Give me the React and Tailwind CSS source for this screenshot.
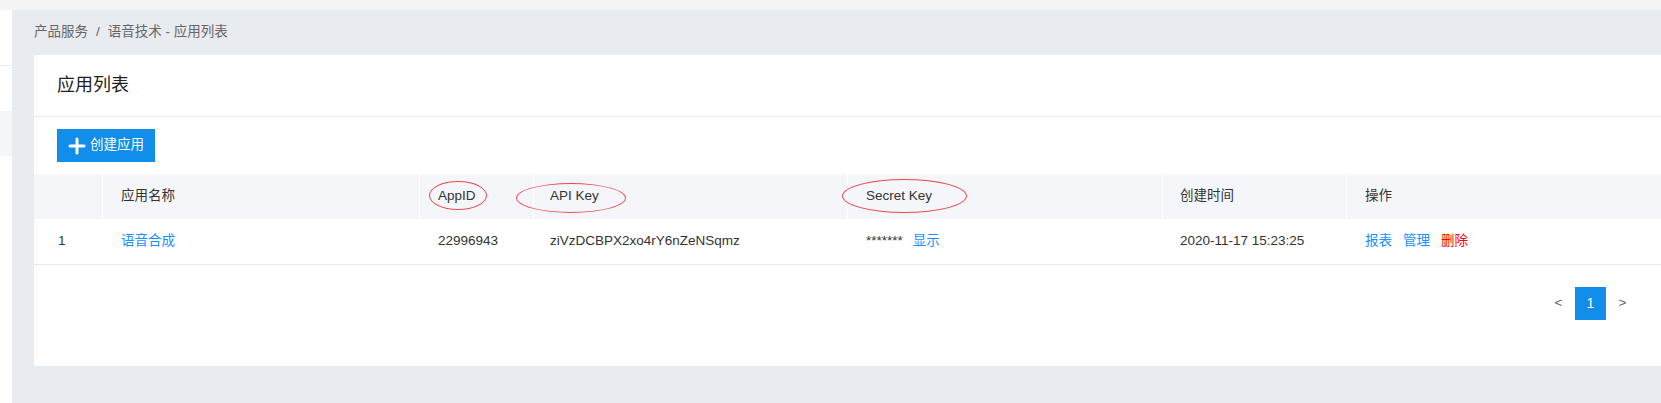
import { Plus } from 'lucide-react';

const font = { fontFamily: '"Liberation Sans", "Noto Sans CJK SC", sans-serif' };

const cols = 'grid grid-cols-[68px_317px_114px_314px_315px_184px_1fr]';

function Ring({ className }) {
  return <span className={`absolute rounded-[50%] border border-[#e84a4f] pointer-events-none ${className}`} />;
}

export default function App() {
  return (
    <div className="w-full h-[403px] flex flex-col bg-[#e8ebef] text-[#333] text-[13.5px] overflow-hidden" style={font}>
      <div className="h-[10px] bg-[#f4f4f4] shrink-0" />
      <div className="flex flex-1">
        {/* collapsed side menu */}
        <div className="w-[12px] bg-white flex flex-col shrink-0">
          <div className="h-[56px] border-b border-[#e8eaec]" />
          <div className="h-[45px]" />
          <div className="h-[45px] bg-[#f5f6fa]" />
        </div>

        <div className="flex-1 flex flex-col pl-[22px]">
          <div className="h-[45px] flex items-center text-[#666]">
            <span>产品服务</span>
            <span className="mx-[8px]">/</span>
            <span>语音技术 - 应用列表</span>
          </div>

          <div className="h-[311px] bg-white flex flex-col">
            <div className="h-[62px] flex items-center pl-[23px] border-b border-[#e8eaec] text-[18px] text-[#222]">
              应用列表
            </div>
            <div className="py-[12px] pl-[23px]">
              <button className="h-[33px] w-[98px] bg-[#108ee9] text-white flex items-center pl-[8px] gap-[1px]">
                <Plus size={24} strokeWidth={3} />
                <span>创建应用</span>
              </button>
            </div>

            <div className={`${cols} h-[45px] bg-[#f5f6fa] items-stretch`}>
              <div />
              <div className="border-l border-white flex items-center pl-[18px]">应用名称</div>
              <div className="border-l border-white flex items-center pl-[18px] relative">
                AppID
                <Ring className="left-[9px] top-[7px] w-[58px] h-[29px]" />
              </div>
              <div className="border-l border-white flex items-center pl-[16px] relative">
                API Key
                <Ring className="left-[-18px] top-[9px] w-[110px] h-[30px]" />
              </div>
              <div className="border-l border-white flex items-center pl-[18px] relative">
                Secret Key
                <Ring className="left-[-6px] top-[5px] w-[125px] h-[34px]" />
              </div>
              <div className="border-l border-white flex items-center pl-[17px]">创建时间</div>
              <div className="border-l border-white flex items-center pl-[18px]">操作</div>
            </div>

            <div className={`${cols} h-[46px] border-b border-[#e8eaec] items-center`}>
              <div className="pl-[24px]">1</div>
              <div className="pl-[19px] text-[#1890ff]">语音合成</div>
              <div className="pl-[19px]">22996943</div>
              <div className="pl-[17px]">ziVzDCBPX2xo4rY6nZeNSqmz</div>
              <div className="pl-[19px] flex items-center gap-[10px]">
                <span>*******</span>
                <span className="text-[#1890ff]">显示</span>
              </div>
              <div className="pl-[18px]">2020-11-17 15:23:25</div>
              <div className="pl-[19px] flex gap-[11px]">
                <span className="text-[#1890ff]">报表</span>
                <span className="text-[#1890ff]">管理</span>
                <span className="text-[#ff0000]">删除</span>
              </div>
            </div>

            <div className="flex justify-end pt-[22px] pr-[23px] gap-[1px]">
              <span className="w-[31px] h-[33px] flex items-center justify-center text-[#666]">&lt;</span>
              <span className="w-[31px] h-[33px] flex items-center justify-center bg-[#108ee9] text-white text-[14px]">1</span>
              <span className="w-[31px] h-[33px] flex items-center justify-center text-[#666]">&gt;</span>
            </div>
          </div>
        </div>
      </div>
    </div>
  );
}
